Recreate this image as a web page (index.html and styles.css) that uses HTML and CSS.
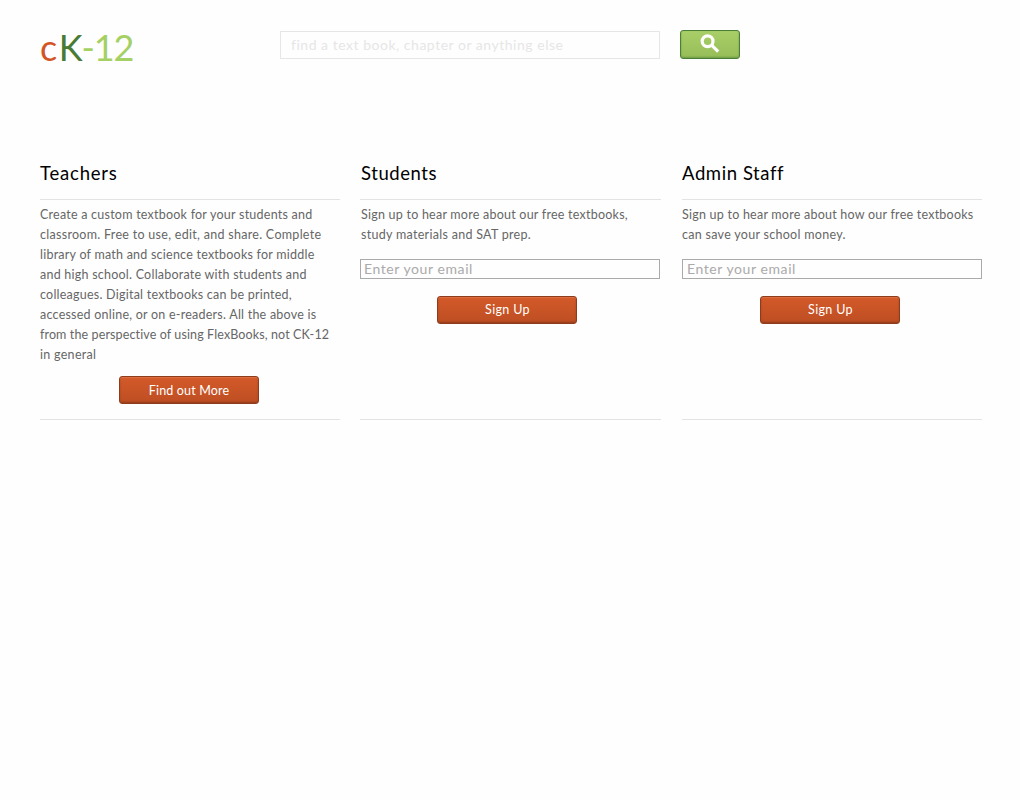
FILE: index.html
```html
<!DOCTYPE html>
<html lang="en">
<head>
<meta charset="utf-8">
<title>CK-12</title>
<link rel="stylesheet" href="styles.css">
</head>
<body>
<header class="header">
  <a class="logo"><span class="logo-c">c</span><span class="logo-k">K</span><span class="logo-num">-12</span></a>
  <form class="search">
    <input class="search-field" type="text" placeholder="find a text book, chapter or anything else">
    <button class="search-button" type="button" aria-label="Search">
      <svg class="search-icon" width="20" height="20" viewBox="0 0 20 20"><circle cx="7.6" cy="7.2" r="5.4"/><path d="M11.6 11.2L18.2 17.6"/></svg>
    </button>
  </form>
</header>
<main class="columns">
  <section class="column">
    <h2 class="title title-wide">Teachers</h2>
    <p class="copy">Create a custom textbook for your students and<br><span class="loose">classroom. Free to use, edit, and share. Complete</span><br>library of math and science textbooks for middle<br>and high school. Collaborate with students and<br>colleagues. Digital textbooks can be printed,<br>accessed online, or on e-readers. All the above is<br><span class="tight">from the perspective of using FlexBooks, not CK-12</span><br><span class="loose">in general</span></p>
    <button class="button more" type="button">Find out More</button>
  </section>
  <section class="column students">
    <h2 class="title">Students</h2>
    <p class="copy">Sign up to hear more about our free textbooks,<br><span class="loose">study materials and SAT prep.</span></p>
    <input class="email" type="email" placeholder="Enter your email">
    <button class="button" type="button">Sign Up</button>
  </section>
  <section class="column admin">
    <h2 class="title">Admin Staff</h2>
    <p class="copy">Sign up to hear more about how our free textbooks<br><span class="loose">can save your school money.</span></p>
    <input class="email" type="email" placeholder="Enter your email">
    <button class="button" type="button">Sign Up</button>
  </section>
</main>
</body>
</html>
```
FILE: styles.css
```css
* { box-sizing: border-box; }
body { margin: 0; background: #fefefe; font-family: Lato, sans-serif; color: #666; font-variant-ligatures: none; }
input { display: block; margin: 0; background: transparent; border-radius: 0; font-family: Lato, sans-serif; }
input::placeholder { color: inherit; opacity: 1; }

.header { display: flex; height: 150px; padding: 30px 0 0 40px; }
.logo { width: 240px; margin-top: -2px; font-size: 36px; line-height: 38px; }
.logo-c { color: #d35525; letter-spacing: 1.5px; }
.logo-k { color: #497b34; letter-spacing: -1px; }
.logo-num { color: #a5d063; letter-spacing: -1.1px; }

.search { display: flex; gap: 20px; }
.search-field { width: 380px; height: 28px; margin-top: 1px; padding: 0 0 1px 10px; border: 1px solid #e6e6e6; color: #e6e6e6; font-size: 14px; letter-spacing: 0.52px; }
.search-button { display: flex; align-items: flex-start; justify-content: center; width: 60px; height: 29px; padding: 3px 0 0; border: 1px solid #4a7f38; border-radius: 3px; background: linear-gradient(#a9cf68, #97bd59); box-shadow: inset 0 -1px 2px #6f9a43; }
.search-icon { fill: none; stroke: #fff; stroke-width: 3.2; }

.columns { display: grid; grid-template-columns: 300px 301px 300px; column-gap: 20.5px; padding-left: 40px; }
.column { display: flex; flex-direction: column; height: 270px; border-bottom: 1px solid #e3e3e3; }
.title { height: 50px; margin: 0; border-bottom: 1px solid #e3e3e3; color: #000; font-size: 18.5px; font-weight: 400; line-height: 47px; letter-spacing: 0.58px; }
.title-wide { letter-spacing: 0.8px; }
.copy { margin: 5px 0 14px; font-size: 12.5px; line-height: 20px; letter-spacing: 0.235px; white-space: nowrap; }
.loose { letter-spacing: 0.29px; }
.tight { letter-spacing: 0.12px; }
.email { width: 300px; height: 20px; padding: 0 0 2px 4px; border: 1px solid #aaa; color: #aaa; font-size: 14px; letter-spacing: 0.58px; }
.button { width: 140px; height: 28px; margin: 17px 0 0 77px; padding: 0 0 2px 1px; border: 1px solid #8f3c1c; border-radius: 3px; background: linear-gradient(#d45a29, #bd4e23); box-shadow: inset 0 1px 1px #dc7044, inset 0 -1px 2px #933c1a; color: #fff; font-family: Lato, sans-serif; font-size: 12.5px; letter-spacing: 0.35px; }
.more { margin: -3px 0 0 79px; padding: 1px 0 0; letter-spacing: 0.15px; }
.students { margin-left: -0.5px; margin-right: 0.5px; }
.students .title, .students .copy { padding-left: 1px; }
.students .email { padding-left: 3px; }
.admin .button { margin-left: 78px; }
```
